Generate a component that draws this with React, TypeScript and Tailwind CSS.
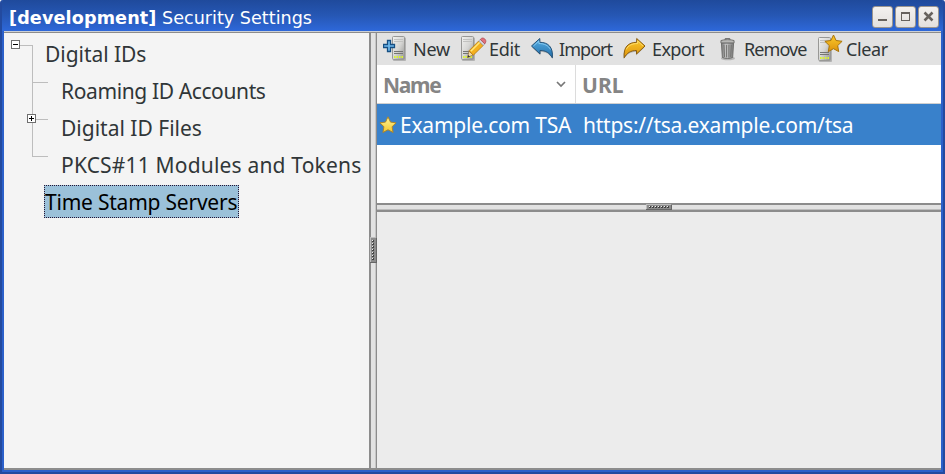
import React from "react";

function ServerBody({ x }: { x: number }) {
  return (
    <g>
      <rect x={x + 1} y="2.5" width="13" height="23.5" rx="1" fill="#77777770" />
      <rect x={x + 0.5} y="1.5" width="12" height="23" rx="1" fill="url(#srv)" stroke="#989896" />
      <path d={`M${x + 2} 4.5h9M${x + 2} 6.5h9`} stroke="#c2c2c0" />
      <path d={`M${x + 2} 16.5h9M${x + 2} 18.5h9`} stroke="#757573" />
      <path d={`M${x + 2} 22h9`} stroke="#dcf62c" strokeWidth="2" strokeDasharray="1.5 1" />
    </g>
  );
}

function Defs() {
  return (
    <defs>
      <linearGradient id="srv" x1="0" y1="0" x2="1" y2="1">
        <stop offset="0" stopColor="#f2f2f0" />
        <stop offset="0.5" stopColor="#d6d6d4" />
        <stop offset="1" stopColor="#91918f" />
      </linearGradient>
      <linearGradient id="gold" x1="0" y1="0" x2="0" y2="1">
        <stop offset="0" stopColor="#fbcb2c" />
        <stop offset="1" stopColor="#dd920c" />
      </linearGradient>
      <linearGradient id="pale" x1="0" y1="0" x2="0" y2="1">
        <stop offset="0" stopColor="#fff69a" />
        <stop offset="1" stopColor="#f3c62c" />
      </linearGradient>
      <linearGradient id="blue" x1="0" y1="0" x2="0" y2="1">
        <stop offset="0" stopColor="#55aee4" />
        <stop offset="1" stopColor="#246faa" />
      </linearGradient>
      <linearGradient id="can" x1="0" y1="0" x2="1" y2="0">
        <stop offset="0" stopColor="#777" />
        <stop offset="0.4" stopColor="#ccc" />
        <stop offset="1" stopColor="#777" />
      </linearGradient>
    </defs>
  );
}

function NewIcon() {
  return (
    <svg className="ml-[6px] block w-[24px] shrink-0" height="28" viewBox="0 0 24 28">
      <Defs />
      <ServerBody x={9} />
      <path d="M4.5 5.5h3v4h4v3h-4v4h-3v-4h-4v-3h4z" fill="#70b9ec" stroke="#164f83" strokeWidth="1.3" />
    </svg>
  );
}

function EditIcon() {
  return (
    <svg className="block w-[26px] shrink-0" height="28" viewBox="0 0 26 28">
      <ServerBody x={0} />
      <path d="M6.500 22.500l1.500-6.500 4 4z" fill="#f2d8a6" stroke="#8b6c3b" strokeWidth=".7" />
      <path d="M6.500 22.500l.7-2.500 1.800 1.800z" fill="#333" />
      <path d="M8 15.800L17.700 6l4.500 4.500L12.300 20.200z" fill="#f4b01e" stroke="#b47a12" strokeWidth=".8" />
      <path d="M9.800 16.300L18.800 7.300" stroke="#ffe77a" strokeWidth="1.500" />
      <path d="M17.700 6l1.600-1.600 4.500 4.500-1.600 1.600z" fill="#d7d7df" stroke="#8a8a92" strokeWidth=".6" />
      <path d="M19.300 4.400l1.400-1.200c2-1 5 1.800 4 4l-.9 1.700z" fill="#e2707a" stroke="#9b3942" strokeWidth=".6" />
    </svg>
  );
}

function ArrowIcon({ out = false }: { out?: boolean }) {
  const shape = "M1.500 11L9.800 3.500V7.300C18 7.300 23.400 12 22.300 22.800C19.500 18 16 15.500 10 15.500V19z";
  return (
    <svg className="block w-[24px] shrink-0" height="28" viewBox="0 0 24 28">
      <g transform={out ? "translate(23.5 0) scale(-1 1)" : undefined}>
        <path d={shape} transform="translate(.5 1.5)" fill="#0003" />
        <path d={shape} fill={out ? "url(#gold)" : "url(#blue)"} stroke={out ? "#8a5d10" : "#245278"} strokeLinejoin="round" />
        <path d="M3.500 11L8.900 6V8.500C14 8.500 18.500 10.500 20.300 14.500" fill="none" stroke={out ? "#ffe27a" : "#96d2f4"} strokeWidth=".8" />
      </g>
    </svg>
  );
}

function TrashIcon() {
  return (
    <svg className="block w-[15px] shrink-0" height="28" viewBox="0 0 16 28">
      <ellipse cx="8.5" cy="24" rx="7.5" ry="2" fill="#0003" />
      <path d="M1.5 7.5h13l-1 15.5c-2.5 1.5-8.500 1.500-11 0z" fill="url(#can)" stroke="#6d6d6b" />
      <path d="M4.200 9.500l.6 13M7 9.500v13.500M9.500 9.500v13.500M12 9.500l-.6 13" stroke="#6e6e6c" />
      <path d="M5.500 4.500v-1.500h5v1.500" fill="none" stroke="#555" />
      <path d="M1 5c3-1.300 11-1.300 14 0v2.500h-14z" fill="#b8b8b6" stroke="#6d6d6b" />
    </svg>
  );
}

function ClearIcon() {
  return (
    <svg className="block w-[25px] shrink-0" height="30" viewBox="0 0 25 30">
      <g transform="translate(0 2)">
        <ServerBody x={0} />
      </g>
      <path d="M15.500 1l2.600 5.500 6 .8-4.400 4.300 1 6-5.200-2.900-5.200 2.900 1-6-4.400-4.300 6-.8z" fill="url(#gold)" stroke="#a87408" strokeLinejoin="round" />
    </svg>
  );
}

function Expander({ plus = false }: { plus?: boolean }) {
  return (
    <span className="block h-[9px] w-[9px]">
      <svg width="9" height="9" viewBox="0 0 9 9" shapeRendering="crispEdges">
        <rect x=".5" y=".5" width="8" height="8" fill="#fff" stroke="#6f6f6f" />
        <path d={plus ? "M2 4.500h5M4.500 2v5" : "M2 4.500h5"} stroke="#000" />
      </svg>
    </span>
  );
}

const children = [
  { name: "Roaming ID Accounts", track: "tracking-[-0.38px]" },
  { name: "Digital ID Files", track: "tracking-[0px]" },
  { name: "PKCS#11 Modules and Tokens", track: "tracking-[0.18px]" },
];

function Tree() {
  return (
    <nav className="relative h-full w-[365px] shrink-0 overflow-hidden bg-[#f4f4f4] pt-[3px] text-[21px] leading-[37px] whitespace-nowrap text-[#303638]">
      <svg className="absolute top-0 left-0" width="60" height="140" shapeRendering="crispEdges" fill="none" stroke="#bdbdbd">
        <path d="M16 12.500h12.500v111H44M28.500 49.500H44M28.500 86.500H44" />
      </svg>
      <div className="absolute top-[7px] left-[7px]"><Expander /></div>
      <div className="absolute top-[81px] left-[23px]"><Expander plus /></div>
      <div className="h-[37px] pl-[41px] tracking-[-0.05px]">Digital IDs</div>
      {children.map((c) => (
        <div key={c.name} className={"h-[37px] pl-[57px] " + c.track}>{c.name}</div>
      ))}
      <div className="mt-[1px] ml-[40px] h-[33px] w-[195px] border border-dotted border-[#251434] bg-[#9bc1d9] leading-[33px] tracking-[-0.22px] text-black">
        Time Stamp Servers
      </div>
    </nav>
  );
}

function Tool({ width, pad, children }: { width: string; pad: string; children: React.ReactNode }) {
  return <span className={"block shrink-0 " + width + " " + pad}>{children}</span>;
}

function Toolbar() {
  return (
    <div className="flex h-[32px] shrink-0 items-center overflow-hidden bg-[#e2e2e2] text-[18px] leading-[32px] whitespace-nowrap text-[#303638]">
      <NewIcon />
      <Tool width="w-[54px]" pad="pl-[6px] tracking-[-0.2px]">New</Tool>
      <EditIcon />
      <Tool width="w-[43px]" pad="pl-[2px] tracking-[-0.3px]">Edit</Tool>
      <ArrowIcon />
      <Tool width="w-[69px]" pad="pl-[5px] tracking-[-0.95px]">Import</Tool>
      <ArrowIcon out />
      <Tool width="w-[73px]" pad="pl-[5px] tracking-[-0.6px]">Export</Tool>
      <TrashIcon />
      <Tool width="w-[83px]" pad="pl-[9px] tracking-[-0.9px]">Remove</Tool>
      <ClearIcon />
      <Tool width="w-[60px]" pad="pl-[3px] tracking-[-0.4px]">Clear</Tool>
    </div>
  );
}

function Grip({ vertical = false }: { vertical?: boolean }) {
  const dots = [0, 1, 2, 3, 4, 5, 6];
  return (
    <svg
      className={vertical ? "absolute top-[204px] -left-[1px]" : "absolute top-[1px] left-[269px]"}
      width={vertical ? 7 : 26}
      height={vertical ? 26 : 6}
      viewBox={vertical ? "0 0 7 26" : "0 0 26 6"}
      shapeRendering="crispEdges"
    >
      <rect width="26" height="26" fill="#8c8c8c" />
      <path d={vertical ? "M.5 25V.5H6" : "M.5 5V.5H25"} stroke="#bdbdbd" fill="none" />
      <path d={vertical ? "M0 25.500H6.500V1" : "M0 5.500H25.500V1"} stroke="#666" fill="none" />
      {dots.map((d) => (
        <g key={d} transform={vertical ? `translate(2 ${3 + d * 3})` : `translate(${3 + d * 3} 2)`}>
          <rect width="2" height="2" fill="#444" />
          <rect width="1" height="1" fill="#eee" />
        </g>
      ))}
    </svg>
  );
}

function WindowButton({ kind }: { kind: "min" | "max" | "close" }) {
  return (
    <button className="h-[22px] w-[21px] rounded-[3px] border border-[#9b958f] bg-linear-to-b from-[#f3f1ef] to-[#e3e0de]">
      <svg width="19" height="20" viewBox="0 0 19 20" fill="none" stroke="#67625e" shapeRendering={kind === "close" ? "auto" : "crispEdges"}>
        {kind === "min" && <path d="M5 13h9" strokeWidth="2" />}
        {kind === "max" && <path d="M5.500 5.500h8v8h-8zM5 6.500h9" />}
        {kind === "close" && <path d="M5.500 5.500l8 8M13.500 5.500l-8 8" strokeWidth="2.500" />}
      </svg>
    </button>
  );
}

export default function App() {
  return (
    <div className="flex h-[474px] w-[945px] flex-col overflow-hidden rounded-t-[3px] border-r-2 border-b-2 border-l-2 border-[#234a9f] bg-[#2d62cc] font-[family-name:'Noto_Sans',sans-serif]">
      <header className="flex h-[31px] shrink-0 bg-linear-to-b from-[#1f4a9c] via-[#2657b4] to-[#2e68da] pr-[4px] pl-[7px] font-[family-name:'DejaVu_Sans',sans-serif] text-[17.6px] whitespace-nowrap text-white">
        <div className="w-[153px] leading-[36px] font-bold tracking-[0.12px]">[development]</div>
        <div className="flex-1 leading-[36px]">Security Settings</div>
        <div className="flex gap-[2px] pt-[6px]">
          <WindowButton kind="min" />
          <WindowButton kind="max" />
          <WindowButton kind="close" />
        </div>
      </header>
      <div className="flex min-h-0 flex-1 border-r-2 border-b-2 border-l-2 border-[#2b60ca]">
        <div className="flex min-w-0 flex-1 flex-col border-t border-[#ccd0d6]">
          <main className="flex min-h-0 flex-1 border-t border-b-2 border-[#8c8c8c]">
            <Tree />
            <div className="relative w-[8px] shrink-0 border-r border-l-2 border-[#8c8c8c] bg-[#e2e2e2]">
              <div className="ml-auto h-full w-[1px] bg-[#c6c6c6]" />
              <Grip vertical />
            </div>
            <section className="flex min-w-0 flex-1 flex-col">
              <Toolbar />
              <div className="flex h-[39px] shrink-0 border-b border-[#d0d0d0] bg-white text-[21px] leading-[40px] font-bold text-[#858585]">
                <div className="flex w-[199px] border-r border-[#dcdcdc] pl-[6px]">
                  <div className="flex-1 tracking-[-1.300px]">Name</div>
                  <svg className="mt-[13px] mr-[8px]" width="12" height="12" viewBox="0 0 12 12" fill="none" stroke="#777" strokeWidth="1.700"><path d="M2 4l4 4 4-4" /></svg>
                </div>
                <div className="pl-[6px]">URL</div>
              </div>
              <div className="flex h-[41px] shrink-0 items-center bg-[#3981cb] text-[21px] leading-[42px] whitespace-nowrap text-white">
                <svg className="ml-[2px] block shrink-0" width="18" height="18" viewBox="0 0 18 18">
                  <path d="M9 .8l2.500 5.300 5.600.7-4 3.900 1 5.800-5.100-2.700-5.100 2.700 1-5.800-4-3.900 5.600-.7z" fill="url(#pale)" stroke="#a8842c" strokeLinejoin="round" />
                </svg>
                <div className="w-[183px] pt-[1px] pl-[3px] tracking-[-0.22px]">Example.com TSA</div>
                <div className="pt-[1px] pl-[3px] tracking-[-0.24px]">https://tsa.example.com/tsa</div>
              </div>
              <div className="h-[58px] shrink-0 bg-white" />
              <div className="relative h-[9px] shrink-0 border-t-2 border-b-2 border-[#8c8c8c] bg-[#e2e2e2]">
                <div className="mt-[4px] h-[1px] bg-[#bdbdbd]" />
                <div className="absolute -top-[2px] left-0"><Grip /></div>
              </div>
              <div className="flex-1 bg-[#ececec]" />
            </section>
          </main>
        </div>
      </div>
    </div>
  );
}
